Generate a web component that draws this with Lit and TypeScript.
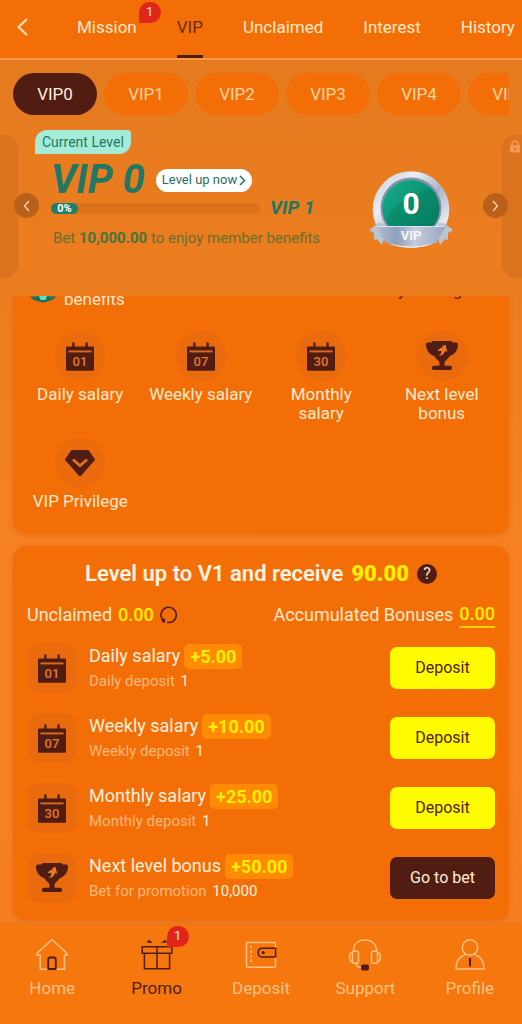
import { LitElement, html, css, svg, nothing } from "lit";
import { customElement, state } from "lit/decorators.js";
import { classMap } from "lit/directives/class-map.js";

const calendar = (day: string) => svg`
  <svg class="glyph" viewBox="0 0 28 29" width="28" height="29" role="img" aria-label="Calendar ${day}">
    <path fill="#511d12" d="M1 4.6h5.200V1.200Q6.200.2 7.400.2t1.200 1V4.600h10.800V1.200q0-1 1.200-1t1.200 1V4.600H27q1 0 1 1V28q0 .8-1 .8H1q-1 0-1-.8V5.600q0-1 1-1z"/>
    <path fill="#d8691a" d="M2.400 8.400h23.200v2H2.400z"/>
    <text x="14" y="24" text-anchor="middle" font-family="Roboto, sans-serif" font-size="13" font-weight="500" fill="#e57a2c">${day}</text>
  </svg>`;

const trophy = svg`
  <svg class="glyph" viewBox="0 0 32 30" width="32" height="30" aria-hidden="true">
    <path fill="#511d12" d="M7.500 0h17q1.800 0 2 1.400h3.700q1.800 0 1.800 1.900C32 9.500 28.500 13.600 23.600 15.300 21.600 18.200 18.800 20.300 18.600 21v3.800h5.600q1.800 0 1.800 1.700v1q0 1.600-1.800 1.600H7.800Q6 29.100 6 27.500v-1q0-1.700 1.800-1.700h5.600V21C13.200 20.300 10.400 18.200 8.400 15.300 3.500 13.600 0 9.500 0 3.300q0-1.900 1.800-1.900h3.700Q5.700 0 7.500 0z"/>
    <path fill="#ee7a1f" d="M19.500 3.800l1.700 7.200-2-1.300c-.8 3.100-3 5-6.600 5.300 2.200-1.400 3-3 2.600-5.200l-3.600.4c1.100-2.300 3-3.500 5.400-3.700l-1-1.300z"/>
  </svg>`;

const diamond = svg`
  <svg class="glyph" viewBox="0 0 30 27" width="30" height="27" aria-hidden="true">
    <path fill="#511d12" d="M7.200 0h15.600q.8 0 1.300.7l5.500 8q.6.9-.1 1.700L16 25.800q-1 1-2 0L.5 10.400q-.7-.8-.1-1.700l5.500-8Q6.400 0 7.200 0z"/>
    <path fill="none" stroke="#e37220" stroke-width="2.800" d="M8 9.500l7 6.200 7-6.200"/>
  </svg>`;

const badge = (size: number) => svg`
  <svg viewBox="0 0 84 77" width=${size} height=${Math.round((size * 77) / 84)} role="img" aria-label="VIP 0 badge">
    <defs>
      <linearGradient id="rim" x1="0" y1="0" x2="1" y2="1">
        <stop offset="0" stop-color="#c3cad9"/><stop offset=".3" stop-color="#e9ecf3"/>
        <stop offset=".55" stop-color="#aab3c9"/><stop offset=".8" stop-color="#e8ebf3"/><stop offset="1" stop-color="#9da7bd"/>
      </linearGradient>
      <linearGradient id="gem" x1="0" y1="0" x2="1" y2="1">
        <stop offset="0" stop-color="#16b089"/><stop offset=".45" stop-color="#0c9576"/><stop offset="1" stop-color="#057458"/>
      </linearGradient>
      <linearGradient id="band" x1="0" y1="0" x2="1" y2="0">
        <stop offset="0" stop-color="#b3bed2"/><stop offset=".3" stop-color="#8ea0bd"/>
        <stop offset=".55" stop-color="#c3ccdc"/><stop offset="1" stop-color="#96a5bf"/>
      </linearGradient>
    </defs>
    <circle cx="42" cy="38.500" r="38.300" fill="url(#rim)"/>
    <circle cx="42" cy="37" r="30.500" fill="#8791ab"/>
    <circle cx="42" cy="37.500" r="28.500" fill="url(#gem)"/>
    <path d="M17 49Q30 24 63 18A28 28 0 0 1 69 46l-8 9H20z" fill="#057a5f" opacity=".35"/>
    <path d="M0 59l9-7h6v16l-2 6-5-6-3 1 0-7z" fill="#b8c5d3"/>
    <path d="M84 59l-9-7h-6v16l2 6 5-6 3 1 0-7z" fill="#b8c5d3"/>
    <path d="M7 55l9 1 2 13z" fill="#7184a0"/><path d="M77 55l-9 1-2 13z" fill="#7184a0"/>
    <path d="M6 54q1 1.500 3 1.500h66q2 0 3-1.500l-11 18q-25 8-50 0z" fill="url(#band)"/>
    <path d="M20 72.500q22 6 44 0-10 4.300-22 4.300t-22-4.300z" fill="#eef0f5"/>
    <path d="M8 55.500h68" stroke="#dde2ec" stroke-width="1"/>
    <text x="42" y="43" text-anchor="middle" font-family="Roboto, sans-serif" font-size="30" font-weight="700" fill="#fff">0</text>
    <text x="42" y="69" text-anchor="middle" font-family="Roboto, sans-serif" font-size="13" font-weight="700" fill="#f4f6fa">VIP</text>
  </svg>`;

const wings = svg`
  <svg viewBox="0 0 26 26" width="26" height="26" aria-hidden="true">
    <circle cx="13" cy="12" r="10" fill="#0c8a6c"/>
    <path fill="#1b6f5c" d="M0 19.500h26q-3 4.500-13 6-10-1.500-13-6z"/>
    <path fill="#5fe0bd" d="M9 19h8l-1.500 4h-5z"/>
  </svg>`;

const chevron = (dir: "left" | "right", w: number, h: number, stroke: number) => svg`
  <svg viewBox="0 0 ${w} ${h}" width=${w} height=${h} aria-hidden="true">
    <path fill="none" stroke="currentColor" stroke-width=${stroke}
      d=${dir === "left" ? `M${w - 1} 1L1.500 ${h / 2}L${w - 1} ${h - 1}` : `M1 1L${w - 1.5} ${h / 2}L1 ${h - 1}`}/>
  </svg>`;

const navIcons: Record<string, unknown> = {
  Home: svg`<svg viewBox="0 0 34 34" width="34" height="34" fill="none" stroke="#ffc283" stroke-width="1.500" stroke-linejoin="round" aria-hidden="true">
      <path d="M17 1.500L31.500 15 32.500 17H29.500V31.200H5.200V17H1.500L2.500 14.800z"/>
      <path stroke="#511d12" stroke-width="1.800" d="M13.200 31V21.500q0-2 2-2h3.600q2 0 2 2V31z"/>
    </svg>`,
  Promo: svg`<svg viewBox="0 0 34 34" width="34" height="34" fill="none" stroke="#511d12" stroke-width="1.500" aria-hidden="true">
      <path d="M2.200 8.800h29.600v6.400H2.200zM4.400 15.200h25.200v15.600H4.400zM17 8.800v22"/>
      <path fill="#511d12" stroke="none" d="M6.500 4.500L9 1.800l4 3.200zM27.500 4.500L25 1.800l-4 3.200z"/>
    </svg>`,
  Deposit: svg`<svg viewBox="0 0 34 34" width="34" height="34" fill="none" stroke="#ffc283" stroke-width="1.500" aria-hidden="true">
      <path d="M31.500 10V5.500q0-1-1-1h-27q-1 0-1 1v22.700q0 1 1 1h27q1 0 1-1V19"/>
      <path stroke-dasharray="2.500 2" d="M7.200 8v18"/>
      <path stroke="#511d12" d="M31.600 10.200H18q-3.800 0-3.800 4.400t3.800 4.400h13.600z"/>
      <circle cx="19.200" cy="14.600" r="1.600" fill="#511d12" stroke="none"/>
    </svg>`,
  Support: svg`<svg viewBox="0 0 34 34" width="34" height="34" fill="none" stroke="#ffc283" stroke-width="1.500" aria-hidden="true">
      <path d="M5.500 13.500C5.500 6 10 2 17 2s11.500 4 11.500 11.500"/>
      <rect x="4.500" y="13.200" width="6" height="12" rx="1.500"/><rect x="23.500" y="13.200" width="6" height="12" rx="1.500"/>
      <path d="M4.500 14.500Q1.500 15 1.500 19.200t3 4.700M29.500 14.500q3 .5 3 4.700t-3 4.700M8 25.200Q8 29 13 29.500"/>
      <rect x="13" y="26.500" width="8" height="6" rx="2" fill="#511d12" stroke="none"/>
    </svg>`,
  Profile: svg`<svg viewBox="0 0 34 34" width="34" height="34" fill="none" stroke="#ffc283" stroke-width="1.500" aria-hidden="true">
      <circle cx="17" cy="9.500" r="7.700"/>
      <path d="M10.500 17.500C5.500 19.500 3 24 3 31h28c0-7-2.500-11.500-7.500-13.500"/>
      <path d="M10.500 17.500l2-1.600M23.500 17.500l-2-1.600"/>
      <path stroke="#511d12" stroke-width="2" d="M17 20v8.500"/>
    </svg>`,
};

@customElement("app-root")
export class AppRoot extends LitElement {
  @state() private tab = "VIP";
  @state() private level = 0;

  private tabs = [{ name: "Mission", count: 1 }, { name: "VIP" }, { name: "Unclaimed" }, { name: "Interest" }, { name: "History" }] as { name: string; count?: number }[];
  private benefits = [
    { label: "Daily salary", icon: calendar("01") },
    { label: "Weekly salary", icon: calendar("07") },
    { label: "Monthly salary", icon: calendar("30") },
    { label: "Next level bonus", icon: trophy },
    { label: "VIP Privilege", icon: diamond },
  ];
  private rewards = [
    { title: "Daily salary", amount: "+5.00", hint: "Daily deposit", value: "1", action: "Deposit", icon: calendar("01") },
    { title: "Weekly salary", amount: "+10.00", hint: "Weekly deposit", value: "1", action: "Deposit", icon: calendar("07") },
    { title: "Monthly salary", amount: "+25.00", hint: "Monthly deposit", value: "1", action: "Deposit", icon: calendar("30") },
    { title: "Next level bonus", amount: "+50.00", hint: "Bet for promotion", value: "10,000", action: "Go to bet", icon: trophy },
  ];

  static styles = css`
    :host {
      display: flex; flex-direction: column; height: 100vh; overflow: hidden;
      font-family: Roboto, sans-serif; font-size: 18px; line-height: 20px; color: #ffe9cd;
      background: linear-gradient(#e57a1f 60px, #eb7d1f 250px, #f88222 560px, #f77f20 900px);
    }
    * { box-sizing: border-box; }
    button { font: inherit; color: inherit; border: 0; padding: 0; background: none; cursor: pointer; }
    a { color: inherit; text-decoration: none; }
    svg { display: block; flex: none; }
    h2, p, ul { margin: 0; padding: 0; font: inherit; list-style: none; }

    .topbar { flex: none; display: flex; height: 60px; background: #f46e08; border-bottom: 2px solid #fb9a4b; }
    .back { flex: none; width: 57px; padding-left: 17px; padding-bottom: 4px; color: #ffe3bb; }
    .tabs { flex: 1; min-width: 0; display: flex; overflow: hidden; }
    .tab { flex: none; margin: 0 20px; padding: 0 0 4px; position: relative; font-size: 17px; }
    .tab.on { color: #6b2710; border-bottom: 3px solid #511d12; padding-bottom: 1px; }
    .count {
      position: absolute; display: block; min-width: 22px; height: 21px; border-radius: 11px 11px 11px 0;
      background: #e1251b; color: #ffe9dc; font-size: 13px; line-height: 20px; text-align: center;
    }
    .tab .count { left: calc(100% + 2px); top: 2px; }

    .levels { flex: none; display: flex; gap: 7px; margin: 13px 13px 0; overflow: hidden; }
    .level { flex: none; width: 84px; height: 42px; border-radius: 21px; background: #f46e08; color: #ffd6a0; font-size: 17px; }
    .level.on { background: #511d12; color: #ffeedd; }

    .carousel { flex: none; position: relative; display: flex; height: 181px; padding-top: 20px; }
    .peek { flex: none; width: 18px; height: 143px; background: #db721d; border-radius: 0 14px 14px 0; }
    .peek.next { width: 20px; padding: 5px 0 0 7px; border-radius: 14px 0 0 14px; overflow: hidden; }
    .arrow {
      position: absolute; top: 78px; width: 25px; height: 25px; border-radius: 50%; color: #fbd7ae;
      background: #b9611a; display: grid; place-items: center;
    }
    .arrow.prev { left: 14px; }
    .arrow.fwd { right: 14px; }
    .card { flex: 1; min-width: 0; display: flex; padding: 0 49px 0 17px; color: #227762; }
    .info { flex: 1; min-width: 0; margin-top: -5px; }
    .tag {
      display: block; width: max-content; height: 24px; padding: 0 7px; border-radius: 12px 4px 12px 0;
      background: #a5ecd8; font-size: 14px; line-height: 24px;
    }
    .line { display: flex; align-items: center; gap: 10px; padding-left: 16px; }
    .line.top { margin-top: 8px; gap: 11px; }
    .rank { font-size: 40px; line-height: 36px; font-weight: 700; font-style: italic; white-space: nowrap; }
    .now {
      display: flex; align-items: center; gap: 2px; height: 23px; padding: 0 6px; border-radius: 12px;
      background: #fff; color: #2b6d60; font-size: 13px; line-height: 22px; white-space: nowrap;
    }
    .meter { flex: none; width: 209px; height: 11px; border-radius: 6px; background: #dc711c; }
    .fill { width: 27px; height: 11px; border-radius: 6px; background: #227d68; color: #fff; font-size: 11px; line-height: 11px; font-weight: 700; text-align: center; }
    .goal { font-size: 19px; line-height: 20px; font-weight: 700; font-style: italic; white-space: nowrap; }
    .bet { padding: 10px 0 0 18px; font-size: 15px; line-height: 20px; color: #65702f; white-space: nowrap; }
    .bet b { color: #46743d; }
    .card .medal { flex: none; margin-top: 36px; }

    .scroll { flex: 1; min-height: 0; overflow-y: auto; scrollbar-width: none; padding: 0 13px 5px; }
    .scroll::-webkit-scrollbar { display: none; }
    .panel { background: #f46e08; border-radius: 14px; box-shadow: 0 1px 5px rgba(190, 90, 20, .45); }
    .benefits { padding: 14px 7px 23px; margin-bottom: 12px; }
    .bhead { display: flex; align-items: center; gap: 8px; padding: 0 0 0 10px; margin-bottom: 22px; font-size: 17px; line-height: 19px; }
    .bhead .name { width: 86px; }
    .bhead .mine { margin-left: auto; width: 118px; color: #511d12; font-size: 16px; }
    .grid { display: grid; grid-template-columns: repeat(4, 1fr); row-gap: 15px; }
    .benefit { display: flex; flex-direction: column; align-items: center; gap: 4px; font-size: 17px; line-height: 19px; text-align: center; padding: 0 8px; }
    .benefit.wide { padding: 0; }
    .disc { width: 50px; height: 50px; border-radius: 50%; background: #e96b0d; display: grid; place-items: center; }

    .earn { padding: 16px 14px 17px; }
    .headline { display: flex; justify-content: center; align-items: center; gap: 8px; font-size: 22px; line-height: 24px; font-weight: 600; color: #fff3e2; }
    .headline b, .sums b, .title b { color: #fff000; }
    .help { width: 20px; height: 20px; border-radius: 50%; background: #511d12; color: #ffe4d0; font-size: 16px; line-height: 20px; font-weight: 400; }
    .sums { display: flex; justify-content: space-between; margin: 16px 0 15px; line-height: 24px; }
    .sum { display: flex; align-items: center; gap: 6px; }
    .sum b { font-weight: 500; }
    .sum .total { border-bottom: 2px solid #ffd000; }
    .reward { display: flex; align-items: center; gap: 12px; height: 50px; margin-bottom: 20px; }
    .reward:last-child { margin-bottom: 0; }
    .tile { flex: none; width: 50px; height: 50px; border-radius: 14px; background: #e96b0d; display: grid; place-items: center; }
    .text { flex: 1; min-width: 0; }
    .title { display: flex; align-items: center; gap: 4px; height: 26px; color: #fff1de; }
    .title b { height: 25px; line-height: 25px; padding: 0 6px; border-radius: 5px; background: #ff8a05; }
    .hint { font-size: 15px; line-height: 24px; color: #ffb878; }
    .hint span { color: #fff1de; margin-left: 2px; }
    .act { flex: none; width: 105px; height: 42px; border-radius: 7px; background: #fffb00; color: #511d12; font-size: 16px; }
    .act.dark { background: #511d12; color: #ffeedd; }

    .nav { flex: none; display: flex; height: 99px; background: #f5770d; box-shadow: 0 -1px 4px rgba(200, 90, 20, .3); padding-top: 13px; }
    .nav a { flex: 1; display: flex; flex-direction: column; align-items: center; gap: 6px; font-size: 17px; line-height: 20px; color: #ffc283; }
    .nav a.on { color: #511d12; }
    .ico { position: relative; }
    .ico .count { left: 27px; top: -12px; }
  `;

  async firstUpdated() {
    await document.fonts.ready;
    const view = this.renderRoot.querySelector(".scroll");
    if (view) view.scrollTop = view.scrollHeight;
  }

  render() {
    return html`
      <header class="topbar">
        <button class="back" aria-label="Back">${chevron("left", 11, 18, 2)}</button>
        <nav class="tabs">
          ${this.tabs.map((t) => html`
            <button class=${classMap({ tab: true, on: this.tab === t.name })} @click=${() => (this.tab = t.name)}>
              ${t.name}${t.count ? html`<span class="count">${t.count}</span>` : nothing}
            </button>`)}
        </nav>
      </header>

      <div class="levels">
        ${[0, 1, 2, 3, 4, 5].map((n) => html`
          <button class=${classMap({ level: true, on: this.level === n })} @click=${() => (this.level = n)}>VIP${n}</button>`)}
      </div>

      <section class="carousel">
        <div class="peek"></div>
        <div class="card">
          <div class="info">
            <span class="tag">Current Level</span>
            <div class="line top">
              <span class="rank">VIP 0</span>
              <button class="now">Level up now ${chevron("right", 7, 11, 1.5)}</button>
            </div>
            <div class="line">
              <div class="meter"><div class="fill">0%</div></div>
              <span class="goal">VIP 1</span>
            </div>
            <p class="bet">Bet <b>10,000.00</b> to enjoy member benefits</p>
          </div>
          <div class="medal">${badge(84)}</div>
        </div>
        <div class="peek next">
          <svg viewBox="0 0 12 13" width="12" height="13" aria-hidden="true">
            <path d="M3 6V4q0-3 3-3t3 3v2" fill="none" stroke="#f29a55" stroke-width="1.400"/>
            <rect x="1" y="5" width="10" height="7.500" rx="1" fill="#f29a55"/>
            <path d="M6 7.500v2.500" stroke="#d06a1c" stroke-width="1.200"/>
          </svg>
        </div>
        <button class="arrow prev" aria-label="Previous level">${chevron("left", 7, 12, 1.3)}</button>
        <button class="arrow fwd" aria-label="Next level">${chevron("right", 7, 12, 1.3)}</button>
      </section>

      <main class="scroll">
        <section class="panel benefits">
          <div class="bhead">
            ${wings}
            <span class="name">VIP 0 benefits</span>
            <a class="mine" href="#privilege">My Privilege</a>
          </div>
          <ul class="grid">
            ${this.benefits.map((b) => html`
              <li class=${classMap({ benefit: true, wide: b.label.length === 13 })}>
                <span class="disc">${b.icon}</span><span>${b.label}</span>
              </li>`)}
          </ul>
        </section>

        <section class="panel earn">
          <h2 class="headline">Level up to V1 and receive <b>90.00</b><button class="help" aria-label="Help">?</button></h2>
          <div class="sums">
            <div class="sum">Unclaimed <b>0.00</b>
              <button aria-label="Refresh">
                <svg viewBox="0 0 18 18" width="18" height="18" aria-hidden="true">
                  <path fill="none" stroke="#511d12" stroke-width="1.600" d="M2 12.500A7.600 7.600 0 1 1 7 16.300"/>
                  <path fill="#511d12" d="M.8 12.200l4.400.5-.5 4-2.200-.3z"/>
                </svg>
              </button>
            </div>
            <div class="sum">Accumulated Bonuses <b class="total">0.00</b></div>
          </div>
          ${this.rewards.map((r) => html`
            <div class="reward">
              <span class="tile">${r.icon}</span>
              <div class="text">
                <div class="title">${r.title} <b>${r.amount}</b></div>
                <p class="hint">${r.hint} <span>${r.value}</span></p>
              </div>
              <button class=${classMap({ act: true, dark: r.action !== "Deposit" })}>${r.action}</button>
            </div>`)}
        </section>
      </main>

      <nav class="nav">
        ${Object.keys(navIcons).map((name) => html`
          <a href="#${name.toLowerCase()}" class=${classMap({ on: name === "Promo" })}>
            <span class="ico">${navIcons[name]}${name === "Promo" ? html`<span class="count">1</span>` : nothing}</span>
            <span>${name}</span>
          </a>`)}
      </nav>
    `;
  }
}
